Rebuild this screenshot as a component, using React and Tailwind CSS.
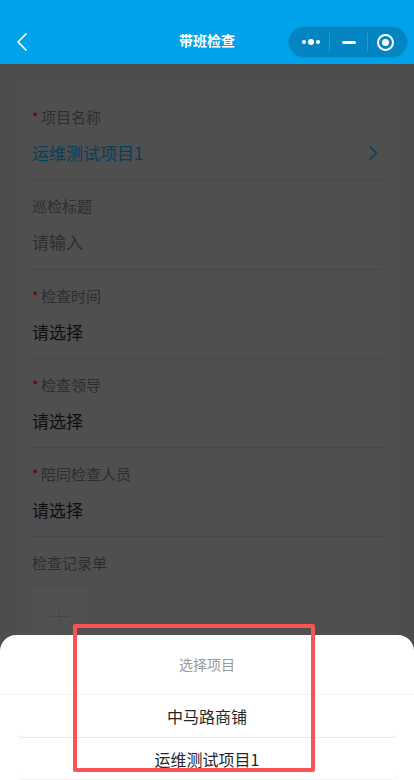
import { ChevronLeft, ChevronRight } from "lucide-react";

const Field = ({ label, required, value, tone = "text-[#0f0f0f]", arrow, height = "h-[89px]" }) => {
  return (
    <div className={`${height} border-b border-[#474747] pt-[15px]`}>
      <div className="flex h-[22px] items-center text-[15px] leading-[22px] text-[#2e2e2e]">
        {required && <span className="mr-px w-[8px] text-[14px] text-[#660000]">*</span>}
        {label}
      </div>
      <div className={`mt-[12px] flex h-[26px] items-center justify-between text-[17px] leading-[26px] ${tone}`}>
        <span>{value}</span>
        <span>{arrow && <ChevronRight size={26} strokeWidth={1.4} className="-mr-[4px] text-[#04405f]" />}</span>
      </div>
    </div>
  );
};

const App = () => {
  return (
    <div className="relative h-[780px] w-[414px] overflow-hidden bg-[#4d4d4d] font-['Noto_Sans_CJK_SC','Liberation_Sans',sans-serif]">
      {/* Header */}
      <div className="relative flex h-[64px] items-end justify-center bg-[#00a3eb] pb-[13px]">
        <ChevronLeft size={32} strokeWidth={1.3} className="absolute left-[6px] top-[26px] text-white" />
        <span className="text-[14px] leading-[22px] font-bold text-white">带班检查</span>
        <div className="absolute left-[288px] top-[26px] flex h-[32px] w-[120px] items-center rounded-full border border-[#0c93cf] bg-[#0285c0]">
          <div className="flex w-[40px] items-center justify-center gap-[2px] pl-[4px]">
            <span className="h-[4px] w-[4px] rounded-full bg-white"></span>
            <span className="h-[6px] w-[6px] rounded-full bg-white"></span>
            <span className="h-[4px] w-[4px] rounded-full bg-white"></span>
          </div>
          <div className="h-[18px] w-px bg-[#2a9bd0]"></div>
          <div className="flex w-[37px] items-center justify-center">
            <span className="h-[3px] w-[14px] rounded-full bg-white"></span>
          </div>
          <div className="h-[18px] w-px bg-[#2a9bd0]"></div>
          <div className="flex flex-1 items-center justify-center pr-[4px]">
            <span className="flex h-[17px] w-[17px] items-center justify-center rounded-full border-2 border-white">
              <span className="h-[7px] w-[7px] rounded-full bg-white"></span>
            </span>
          </div>
        </div>
      </div>

      {/* Form card */}
      <div className="mx-[16px] mt-[16px] h-[700px] bg-[#4f4f4f] px-[16px] pt-[11px]">
        <Field required label="项目名称" value="运维测试项目1" tone="text-[#04405f]" arrow />
        <Field label="巡检标题" value="请输入" tone="text-[#2e2e2e]" height="h-[90px]" />
        <Field required label="检查时间" value="请选择" />
        <Field required label="检查领导" value="请选择" />
        <Field required label="陪同检查人员" value="请选择" />
        <div className="pt-[15px] text-[15px] leading-[22px] text-[#2e2e2e]">检查记录单</div>
        <div className="mt-[14px] flex h-[56px] w-[55px] items-center justify-center bg-[#515151] text-[#464646]">
          <svg width="19" height="19" viewBox="0 0 19 19" fill="none" stroke="currentColor" strokeWidth="1">
            <path d="M0 9.5H19M9.5 0V19" />
          </svg>
        </div>
      </div>

      {/* Bottom sheet */}
      <div className="absolute inset-x-0 top-[635px] h-[145px] rounded-t-[16px] bg-white">
        <div className="flex h-[60px] items-center justify-center border-b border-[#f3f3f3] text-[14px] text-[#9a9a9a]">
          选择项目
        </div>
        <div className="mx-[16px] flex h-[43px] items-center justify-center rounded-b-[6px] border-b border-[#e8e8e8] text-[16px] text-[#262626]">
          中马路商铺
        </div>
        <div className="mx-[16px] flex h-[42px] items-center justify-center rounded-b-[6px] border-b border-[#f5f5f5] text-[16px] text-[#262626]">
          运维测试项目1
        </div>
      </div>

      {/* Red annotation */}
      <div className="absolute left-[73px] top-[624px] h-[148px] w-[242px] rounded-[2px] border-[4px] border-[#f95355]"></div>
    </div>
  );
};

export default App;
